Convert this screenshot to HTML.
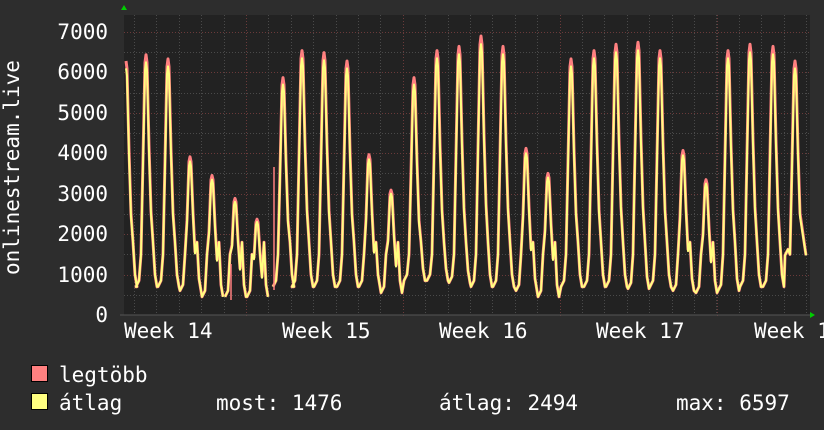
<!DOCTYPE html>
<html><head><meta charset="utf-8"><style>
html,body{margin:0;padding:0;background:#2d2d2d;width:824px;height:430px;overflow:hidden}
svg text{font-family:"DejaVu Sans Mono","Liberation Mono",monospace;font-size:21px;fill:#fff}
</style></head><body>
<svg id="s" width="824" height="430" xmlns="http://www.w3.org/2000/svg">
<rect x="124" y="15" width="686" height="300" fill="#222"/>
<g id="grid"></g>
<g id="data"></g>
<path d="M121 10 L124 5 L127 10 Z" fill="#0c0"/>
<path d="M810 312 L815 315 L810 318 Z" fill="#0c0"/>
<line x1="120" y1="315" x2="810" y2="315" stroke="#555"/>
<g text-anchor="end">
<text x="108" y="322">0</text><text x="108" y="282">1000</text><text x="108" y="241">2000</text>
<text x="108" y="201">3000</text><text x="108" y="160">4000</text><text x="108" y="120">5000</text>
<text x="108" y="79">6000</text><text x="108" y="39">7000</text>
</g>
<text x="124" y="338">Week 14</text><text x="282" y="338">Week 15</text><text x="439" y="338">Week 16</text>
<text x="596" y="338">Week 17</text><text x="754" y="338">Week 18</text>
<text transform="translate(19,275) rotate(-90)">onlinestream.live</text>
<rect x="31.5" y="365.5" width="16" height="16" fill="#ff8080" stroke="#000"/>
<rect x="31.5" y="393.5" width="16" height="16" fill="#ffff80" stroke="#000"/>
<text x="59" y="382">legtöbb</text>
<text x="59" y="410">átlag</text>
<text x="216" y="410">most: 1476</text>
<text x="439" y="410">átlag: 2494</text>
<text x="676" y="410">max: 6597</text>
</svg>
<script>
var ns="http://www.w3.org/2000/svg",g=document.getElementById("grid"),d=document.getElementById("data");
function ln(x1,y1,x2,y2,c,da){var l=document.createElementNS(ns,"line");l.setAttribute("x1",x1);l.setAttribute("y1",y1);l.setAttribute("x2",x2);l.setAttribute("y2",y2);l.setAttribute("stroke",c);if(da)l.setAttribute("stroke-dasharray",da);g.appendChild(l);}
for(var v=500;v<=7000;v+=500){var y=Math.round(315-v*0.04043)+.5;ln(124,y,810,y,(v%1000==0)?"#6a3a3a":"#4a4a4a","1,2");}
for(var x=134;x<810;x+=22.4){var xx=Math.round(x)+.5;ln(xx,15,xx,315,"#4a4a4a","1,2");}
[246,403,560,717].forEach(function(x){ln(x+.5,15,x+.5,318,"#6a3a3a","1,2");});
var P=[[126,6100,700],[146,6250,700],[168,6150,700],[190,3800,600],[212,3350,450],[235,2800,450],[257,2300,450],[283,5700,700],[302,6350,700],[324,6300,700],[347,6100,700],[369,3850,700],[391,3000,550],[414,5700,850],[437,6350,850],[459,6450,800],[481,6700,700],[503,6450,700],[526,4000,600],[548,3400,450],[571,6150,700],[594,6350,700],[616,6500,700],[638,6550,650],[660,6350,700],[683,3950,600],[706,3250,550],[728,6350,600],[750,6500,700],[773,6450,700],[795,6100,1476]];
function Y(v){return 315-v*0.04043;}
function build(k){var s="";P.forEach(function(p,i){var x=p[0],v=p[1]*k,m=p[2];
var pts=[[x-10,m],[x-7,m+150],[x-5,1500],[x-3,0.6*v],[x-1,0.97*v],[x,v],[x+1,0.97*v],[x+3,0.65*v],[x+5,0.4*v],[x+7,1800],[x+9,m+300],[x+11,m]];
if(i==0)pts=pts.slice(5);
if(i==P.length-1)pts=pts.slice(0,9).concat([[x+11,1476]]);
var start=(i==0||i==5||i==7);
pts.forEach(function(q,j){s+=((start&&j==0)?"M":"L")+q[0].toFixed(1)+" "+Y(q[1]).toFixed(1)+" ";});});
return s;}
function pth(s,c,w){var p=document.createElementNS(ns,"path");p.setAttribute("d",s);p.setAttribute("fill","none");p.setAttribute("stroke",c);p.setAttribute("stroke-width",w);p.setAttribute("stroke-linejoin","round");d.appendChild(p);}
pth(build(1.03),"#ff8080",3);
pth(build(1),"#ffff80",2);
pth("M231 300 L231 264 M274 290 L274 167","#ff8080",1.5);
</script>
</body></html>
